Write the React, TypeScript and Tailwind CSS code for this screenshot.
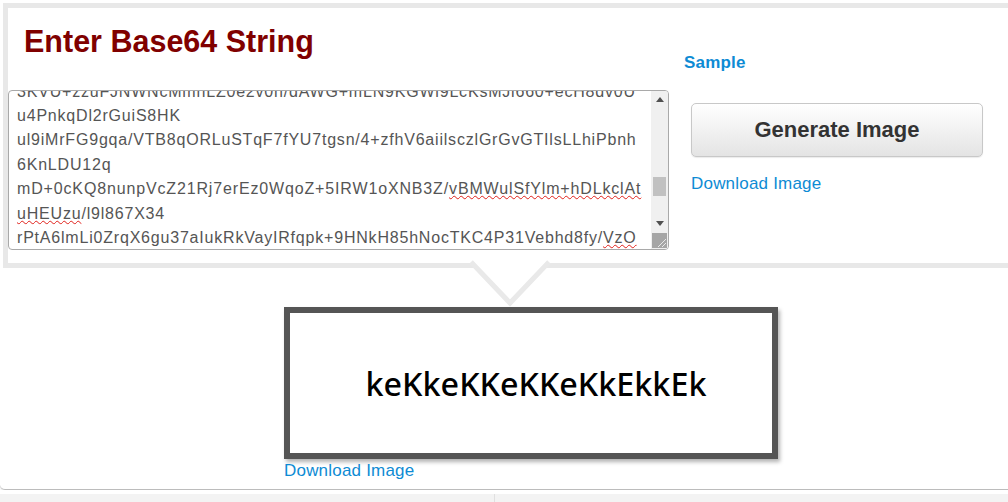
import React from "react";

const Wavy = ({ children }: { children: React.ReactNode }) => (
  <span className="underline decoration-wavy decoration-[#e0201a] decoration-1 underline-offset-[1px]">{children}</span>
);

function FakeTextarea() {
  return (
    <div className="relative h-[160px] w-[661px] overflow-hidden rounded-[4px] border border-[#a9a9a9] bg-white">
      <div className="-mt-[11px] whitespace-nowrap pl-[8px] text-[16px] leading-[24.4px] tracking-[0.8px] text-[#555]">
        <div>3KVU+zzuFJNWNcMmhLZ0e2v0h/dAWG+mLN9KGWi9LcKsMJl660+ecH8dv0U</div>
        <div>u4PnkqDl2rGuiS8HK</div>
        <div>ul9iMrFG9gqa/VTB8qORLuSTqF7fYU7tgsn/4+zfhV6aiilsczlGrGvGTIlsLLhiPbnh</div>
        <div>6KnLDU12q</div>
        <div className="tracking-[0.85px]">
          mD+0cKQ8nunpVcZ21Rj7erEz0WqoZ+5IRW1oXNB3Z/<Wavy>vBMWulSfYlm+hDLkclAt</Wavy>
        </div>
        <div>
          <Wavy>uHEUzu</Wavy>/l9l867X34
        </div>
        <div>
          rPtA6lmLi0ZrqX6gu37aIukRkVayIRfqpk+9HNkH85hNocTKC4P31Vebhd8fy/<Wavy>VzO</Wavy>
        </div>
      </div>
      {/* scrollbar */}
      <div className="absolute right-0 top-0 bottom-0 flex w-[17px] flex-col bg-[#f0f0f0]">
        <div className="flex h-[17px] items-center justify-center">
          <svg width="8" height="5" viewBox="0 0 8 5">
            <polygon points="0,5 8,5 4,0" fill="#505050" />
          </svg>
        </div>
        <div className="flex-1">
          <div className="mx-auto mt-[69px] h-[19px] w-[13px] bg-[#c1c1c1]" />
        </div>
        <div className="flex h-[17px] items-center justify-center">
          <svg width="8" height="5" viewBox="0 0 8 5">
            <polygon points="0,0 8,0 4,5" fill="#505050" />
          </svg>
        </div>
        <div className="flex h-[17px] items-center justify-center">
          <svg width="15" height="15" viewBox="0 0 15 15">
            <rect x="0" y="0" width="15" height="15" fill="#a6a6a6" />
            <line x1="14" y1="6" x2="6" y2="14" stroke="#e8e8e8" strokeWidth="1" />
            <line x1="14" y1="10" x2="10" y2="14" stroke="#e8e8e8" strokeWidth="1" />
          </svg>
        </div>
      </div>
    </div>
  );
}

export default function App() {
  return (
    <div className="h-[502px] w-[1008px] overflow-hidden bg-white font-['Liberation_Sans',Arial,sans-serif]">
      <div className="flex h-[490px] flex-col rounded-bl-[5px] border-b border-[#bcbcbc] bg-white pl-[3px] pt-[3px] shadow-[0_1px_2px_rgba(0,0,0,0.12)]">
        {/* top panel */}
        <div className="relative flex h-[265px] w-[1030px] shrink-0 border-[5px] border-[#e8e8e8]">
          <div className="flex w-[661px] flex-col">
            <h1 className="pl-[16px] pt-[16px] text-[30.5px] font-bold leading-[34.5px] text-[#800000]">
              Enter Base64 String
            </h1>
            <div className="mt-[31px]">
              <FakeTextarea />
            </div>
          </div>
          <div className="ml-[15px] flex flex-col items-start pt-[45px]">
            <a className="cursor-pointer text-[17px] font-bold leading-[19.5px] tracking-[0.2px] text-[#0e8bd4]">Sample</a>
            <button className="ml-[7px] mt-[30px] flex h-[54px] w-[292px] items-center justify-center rounded-[5px] border border-[#c8c8c8] bg-gradient-to-b from-white to-[#e4e4e4] text-[22px] font-bold text-[#333] shadow-[0_1px_1px_rgba(0,0,0,0.08)]">
              Generate Image
            </button>
            <a className="ml-[7px] mt-[17px] cursor-pointer text-[17px] leading-[19.5px] tracking-[0.2px] text-[#0e8bd4]">Download Image</a>
          </div>
          {/* pointer arrow */}
          <svg
            className="absolute left-[457px] top-[254px] overflow-visible"
            width="90"
            height="48"
            viewBox="0 0 90 48"
          >
            <polygon points="6,0 84,0 45,41" fill="#ffffff" />
            <polyline points="6,0 45,41 84,0" fill="none" stroke="#e9e9e9" strokeWidth="5" />
          </svg>
        </div>

        {/* generated image */}
        <div className="ml-[281px] mt-[39px] flex h-[152px] w-[494px] shrink-0 items-center justify-center border-[6px] border-[#555] bg-white pl-[10px] shadow-[2px_3px_4px_rgba(0,0,0,0.3)]">
          <span className="font-['Noto_Sans',sans-serif] text-[32.3px] font-medium text-black">
            keKkeKKeKKeKkEkkEk
          </span>
        </div>
        <a className="ml-[281px] mt-[2px] cursor-pointer text-[17px] leading-[19.5px] tracking-[0.2px] text-[#0e8bd4]">Download Image</a>
      </div>
      {/* bottom strip */}
      <div className="h-[4px] bg-white" />
      <div className="flex h-[8px]">
        <div className="w-[495px] border-r border-[#e0e0e0] bg-[#f3f3f3]" />
        <div className="flex-1 bg-[#f3f3f3]" />
      </div>
    </div>
  );
}
